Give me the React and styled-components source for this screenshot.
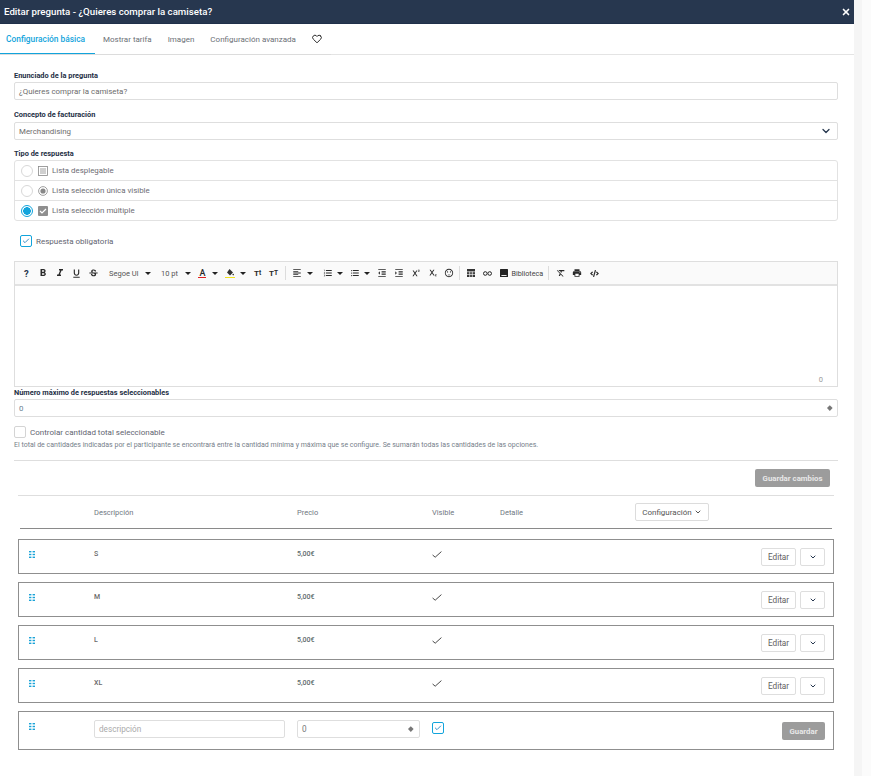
import React from "react";
import styled, { createGlobalStyle } from "styled-components";
import {
  MdFormatBold,
  MdFormatItalic,
  MdFormatUnderlined,
  MdStrikethroughS,
  MdFormatAlignLeft,
  MdFormatListNumbered,
  MdFormatListBulleted,
  MdFormatIndentDecrease,
  MdFormatIndentIncrease,
  MdSuperscript,
  MdSubscript,
  MdSentimentSatisfied,
  MdPrint,
  MdFormatClear,
} from "react-icons/md";
import { FaCode } from "react-icons/fa";
import { FiChevronDown, FiCheck, FiHeart, FiX } from "react-icons/fi";

const items = ["S", "M", "L", "XL"];

function Caret({ width = 11, left = 1.5 }) {
  return (
    <CaretSlot $width={width} $left={left}>
      <CaretMark />
    </CaretSlot>
  );
}

function Tool({ icon: Icon, size = 10 }) {
  return (
    <ToolButton>
      <Icon size={size} />
    </ToolButton>
  );
}

function FillIcon() {
  return (
    <ToolButton>
      <ColorGlyph $bar="#f2e21c">
        <svg width="8" height="7" viewBox="0 0 8 7">
          <path d="M3.5 0 L7 3.4 L4 6.4 L1 3.4 Z" fill="#333" />
          <circle cx="7.2" cy="5.6" r="0.8" fill="#333" />
        </svg>
      </ColorGlyph>
    </ToolButton>
  );
}

function TableIcon() {
  return (
    <svg width="8" height="8" viewBox="0 0 8 8">
      <rect width="8" height="8" fill="#333" />
      <path d="M0 2.8h8M0 5.4h8M2.7 2.5v5.5M5.3 2.5v5.5" stroke="#fff" strokeWidth="0.7" />
    </svg>
  );
}

function LinkIcon() {
  return (
    <svg width="9" height="5" viewBox="0 0 9 5" fill="none" stroke="#222" strokeWidth="1">
      <circle cx="2.3" cy="2.5" r="1.8" />
      <circle cx="6.7" cy="2.5" r="1.8" />
    </svg>
  );
}

function ImageIcon() {
  return (
    <svg width="8" height="8" viewBox="0 0 8 8">
      <rect width="8" height="8" rx="0.5" fill="#222" />
      <rect x="1.4" y="6" width="5.2" height="0.9" fill="#fff" />
    </svg>
  );
}

function DragDots() {
  return (
    <svg width="6" height="7" viewBox="0 0 6 7" fill="#1ba3d8">
      <rect x="0" y="0" width="2.4" height="1.4" />
      <rect x="3.6" y="0" width="2.4" height="1.4" />
      <rect x="0" y="2.8" width="2.4" height="1.4" />
      <rect x="3.6" y="2.8" width="2.4" height="1.4" />
      <rect x="0" y="5.6" width="2.4" height="1.4" />
      <rect x="3.6" y="5.6" width="2.4" height="1.4" />
    </svg>
  );
}

function RadioRow({ checked, icon, children }) {
  return (
    <OptionRow>
      <Radio $checked={checked} />
      <OptionIcon>{icon}</OptionIcon>
      <span>{children}</span>
    </OptionRow>
  );
}

function Row({ name }) {
  return (
    <ItemRow>
      <Handle>
        <DragDots />
      </Handle>
      <ItemName>{name}</ItemName>
      <ItemPrice>5,00€</ItemPrice>
      <Tick>
        <svg width="10" height="7" viewBox="0 0 10 7" fill="none" stroke="#333" strokeWidth="0.9">
          <path d="M0.6 4 L3.2 6.2 L9.4 0.6" />
        </svg>
      </Tick>
      <span />
      <RowActions>
        <SmallButton>Editar</SmallButton>
        <ChevronButton>
          <FiChevronDown size={8} strokeWidth={3} />
        </ChevronButton>
      </RowActions>
    </ItemRow>
  );
}

export default function App() {
  return (
    <Page>
      <GlobalStyle />
      <Modal>
        <Header>
          <Title>Editar pregunta - ¿Quieres comprar la camiseta?</Title>
          <FiX size={10} strokeWidth={4} color="#fff" />
        </Header>
        <Tabs>
          <TabList>
            <ActiveTab>Configuración básica</ActiveTab>
            <Tab>Mostrar tarifa</Tab>
            <Tab>Imagen</Tab>
            <Tab>Configuración avanzada</Tab>
            <HeartTab>
              <FiHeart size={10} strokeWidth={2.4} />
            </HeartTab>
          </TabList>
        </Tabs>
        <Body>
          <Label $top={1} $bottom={1}>
            Enunciado de la pregunta
          </Label>
          <Field>¿Quieres comprar la camiseta?</Field>
          <Label $top={10}>Concepto de facturación</Label>
          <Field>
            Merchandising
            <SelectChevron>
              <FiChevronDown size={12} strokeWidth={2.6} />
            </SelectChevron>
          </Field>
          <Label $top={9} $bottom={1}>
            Tipo de respuesta
          </Label>
          <OptionList>
            <RadioRow
              icon={
                <svg width="10" height="10" viewBox="0 0 10 10" fill="none" stroke="#888" strokeWidth="0.8">
                  <rect x="0.5" y="0.5" width="9" height="9" />
                  <path d="M2 3h6M2 5h6M2 7h6" />
                </svg>
              }
            >
              Lista desplegable
            </RadioRow>
            <RadioRow
              icon={
                <svg width="10" height="10" viewBox="0 0 10 10">
                  <circle cx="5" cy="5" r="4.4" fill="none" stroke="#888" strokeWidth="0.8" />
                  <circle cx="5" cy="5" r="2.6" fill="#888" />
                </svg>
              }
            >
              Lista selección única visible
            </RadioRow>
            <RadioRow
              checked
              icon={
                <svg width="10" height="10" viewBox="0 0 10 10">
                  <rect width="10" height="10" rx="1" fill="#8f8f8f" />
                  <path d="M2 5l2 2 4-4" fill="none" stroke="#fff" strokeWidth="1.2" />
                </svg>
              }
            >
              Lista selección múltiple
            </RadioRow>
          </OptionList>
          <RequiredCheck>
            <CheckBox $checked>
              <FiCheck size={8} strokeWidth={3} />
            </CheckBox>
            Respuesta obligatoria
          </RequiredCheck>
          <Editor>
            <Toolbar>
              <ToolButton>
                <ParagraphMark>?</ParagraphMark>
              </ToolButton>
              <Tool icon={MdFormatBold} size={12} />
              <Tool icon={MdFormatItalic} size={12} />
              <Tool icon={MdFormatUnderlined} size={11} />
              <Tool icon={MdStrikethroughS} size={11} />
              <ToolText $width={52}>
                Segoe UI
                <CaretMark />
              </ToolText>
              <ToolText $width={40}>
                10 pt
                <CaretMark />
              </ToolText>
              <ToolButton>
                <ColorGlyph $bar="#e02020">A</ColorGlyph>
              </ToolButton>
              <Caret />
              <FillIcon />
              <Caret left={1} />
              <SmallGlyph>
                T<small>t</small>
              </SmallGlyph>
              <SmallGlyph>
                T<small>T</small>
              </SmallGlyph>
              <Separator $left={3} $right={3.3} />
              <Tool icon={MdFormatAlignLeft} />
              <Caret width={14} left={1.6} />
              <Tool icon={MdFormatListNumbered} />
              <Caret width={10} left={0.6} />
              <Tool icon={MdFormatListBulleted} />
              <Caret width={10.2} left={0.6} />
              <Tool icon={MdFormatIndentDecrease} />
              <Tool icon={MdFormatIndentIncrease} />
              <Tool icon={MdSuperscript} />
              <Tool icon={MdSubscript} />
              <Tool icon={MdSentimentSatisfied} />
              <Separator $left={2} $right={2} />
              <ToolButton>
                <TableIcon />
              </ToolButton>
              <ToolButton>
                <LinkIcon />
              </ToolButton>
              <ToolButton>
                <ImageIcon />
              </ToolButton>
              <LibraryText>Biblioteca</LibraryText>
              <Separator $left={5} $right={3} />
              <Tool icon={MdFormatClear} />
              <Tool icon={MdPrint} />
              <Tool icon={FaCode} size={9} />
            </Toolbar>
            <EditArea>
              <Counter>0</Counter>
            </EditArea>
          </Editor>
          <Label $top={1} $bottom={1}>
            Número máximo de respuestas seleccionables
          </Label>
          <Field $blue>
            0
            <Spinner />
          </Field>
          <QuantityCheck>
            <CheckBox />
            Controlar cantidad total seleccionable
          </QuantityCheck>
          <Hint>
            El total de cantidades indicadas por el participante se encontrará entre la cantidad
            mínima y máxima que se configure. Se sumarán todas las cantidades de las opciones.
          </Hint>
          <Divider />
          <SaveBar>
            <GreyButton>Guardar cambios</GreyButton>
          </SaveBar>
          <TableArea>
            <TableHead>
              <span />
              <span>Descripción</span>
              <span>Precio</span>
              <span>Visible</span>
              <span>Detalle</span>
              <ConfigButton>
                Configuración <FiChevronDown size={8} strokeWidth={3} />
              </ConfigButton>
            </TableHead>
            {items.map((name) => (
              <Row key={name} name={name} />
            ))}
            <NewRow>
              <Handle>
                <DragDots />
              </Handle>
              <RowInput $placeholder>descripción</RowInput>
              <RowInput $short>
                0
                <Spinner />
              </RowInput>
              <NewCheck>
                <CheckBox $checked>
                  <FiCheck size={8} strokeWidth={3} />
                </CheckBox>
              </NewCheck>
              <span />
              <NewSaveButton $small>Guardar</NewSaveButton>
            </NewRow>
          </TableArea>
        </Body>
      </Modal>
      <ScrollStrip />
    </Page>
  );
}

const GlobalStyle = createGlobalStyle`
  html, body {
    margin: 0;
    height: 100%;
    overflow: hidden;
    background: #fbfbfb;
    font-family: Roboto, "Liberation Sans", sans-serif;
  }
`;

const Page = styled.div`
  display: flex;
  height: 776px;
  overflow: hidden;
`;

const Modal = styled.div`
  width: 854px;
  background: #fff;
  flex-shrink: 0;
`;

const ScrollStrip = styled.div`
  width: 8px;
  background: #f5f5f5;
`;

const Header = styled.header`
  height: 24px;
  box-sizing: border-box;
  background: #27374f;
  border-bottom: 1px solid #20304a;
  display: flex;
  align-items: center;
  justify-content: space-between;
  padding: 0 3px 0 4px;
`;

const Title = styled.h1`
  margin: 0;
  font-size: 9.7px;
  font-weight: 500;
  color: #fff;
`;

const Tabs = styled.nav`
  height: 31px;
  box-sizing: border-box;
  border-bottom: 1px solid #e4e4e4;
`;

const TabList = styled.div`
  display: inline-flex;
  height: 31px;
  box-sizing: border-box;
  border-bottom: 1px solid #dcdcdc;
`;

const Tab = styled.div`
  display: flex;
  align-items: center;
  height: 30px;
  box-sizing: border-box;
  padding: 0 8px;
  font-size: 8px;
  color: #6b6f76;
`;

const ActiveTab = styled(Tab)`
  width: 95px;
  padding: 0 0 0 6px;
  font-size: 8.4px;
  font-weight: 500;
  color: #12a4dc;
  border-bottom: 1px solid #12a4dc;
`;

const HeartTab = styled(Tab)`
  color: #2b2b2b;
  padding: 0 9px 0 8px;
`;

const Body = styled.main`
  padding: 15px 16px 0 14px;
`;

const Label = styled.label`
  display: block;
  margin-top: ${(p) => p.$top || 0}px;
  margin-bottom: ${(p) => p.$bottom ?? 2}px;
  font-size: 7.4px;
  line-height: 10px;
  font-weight: 700;
  color: #1e2f45;
`;

const Field = styled.div`
  height: 18px;
  box-sizing: border-box;
  border: 1px solid #dedede;
  border-radius: 2px;
  display: flex;
  align-items: center;
  justify-content: space-between;
  padding: 0 4px;
  font-size: 7.9px;
  color: ${(p) => (p.$blue ? "#6b7f93" : "#6c6c6c")};
`;

const SelectChevron = styled.span`
  display: flex;
  color: #27374f;
  margin-right: 1px;
`;

const OptionList = styled.div`
  border: 1px solid #e2e2e2;
  border-radius: 3px;
`;

const OptionRow = styled.div`
  height: 19px;
  display: flex;
  align-items: center;
  padding-left: 6px;
  font-size: 7.9px;
  color: #6c6c72;
  & + & {
    border-top: 1px solid #e2e2e2;
  }
`;

const Radio = styled.span`
  width: 12px;
  height: 12px;
  box-sizing: border-box;
  border-radius: 50%;
  margin-right: 5px;
  border: 1px solid ${(p) => (p.$checked ? "#12a4dc" : "#d8d8d8")};
  background: ${(p) => (p.$checked ? "radial-gradient(circle, #12a4dc 0 3.6px, #fff 4px)" : "#fff")};
`;

const OptionIcon = styled.span`
  display: flex;
  width: 14px;
`;

const CheckBox = styled.span`
  width: 12px;
  height: 12px;
  box-sizing: border-box;
  border-radius: 2px;
  display: inline-flex;
  align-items: center;
  justify-content: center;
  color: #3c8fc8;
  border: 1px solid ${(p) => (p.$checked ? "#12a4dc" : "#d4d4d4")};
`;

const CheckLine = styled.div`
  display: flex;
  align-items: center;
  gap: 4px;
  font-size: 8px;
  color: #5f6470;
`;

const RequiredCheck = styled(CheckLine)`
  margin: 14px 0 14px 6px;
`;

const QuantityCheck = styled(CheckLine)`
  margin-top: 9px;
`;

const Editor = styled.section`
  border: 1px solid #dedede;
`;

const Toolbar = styled.div`
  height: 22px;
  background: #fafafa;
  border-bottom: 2px solid #e2e2e2;
  display: flex;
  align-items: center;
  padding-left: 3px;
  color: #2a2a2a;
`;

const ToolButton = styled.span`
  width: 16.8px;
  flex-shrink: 0;
  display: flex;
  align-items: center;
  justify-content: center;
`;

const ParagraphMark = styled.span`
  font-size: 9.5px;
  font-weight: 700;
  color: #27374f;
`;

const CaretSlot = styled.span`
  width: ${(p) => p.$width}px;
  padding-left: ${(p) => p.$left}px;
  box-sizing: border-box;
  flex-shrink: 0;
  display: flex;
`;

const CaretMark = styled.span`
  width: 0;
  height: 0;
  border-left: 3px solid transparent;
  border-right: 3px solid transparent;
  border-top: 3px solid #222;
  flex-shrink: 0;
`;

const ToolText = styled.span`
  width: ${(p) => p.$width}px;
  flex-shrink: 0;
  padding: 0 3px 0 7px;
  box-sizing: border-box;
  display: flex;
  align-items: center;
  justify-content: space-between;
  font-size: 7.5px;
  color: #555;
`;

const ColorGlyph = styled.span`
  display: flex;
  align-items: center;
  justify-content: center;
  height: 9px;
  padding: 0 1px;
  font-size: 9px;
  font-weight: 500;
  border-bottom: 1px solid ${(p) => p.$bar};
`;

const SmallGlyph = styled(ToolButton)`
  width: 16px;
  font-size: 8px;
  font-weight: 700;
  small {
    font-size: 6.5px;
  }
`;

const Separator = styled.span`
  width: 1px;
  height: 14px;
  margin: 0 ${(p) => p.$right}px 0 ${(p) => p.$left}px;
  background: #dcdcdc;
  flex-shrink: 0;
`;

const LibraryText = styled.span`
  font-size: 7.2px;
  color: #444;
  margin-left: -1.4px;
`;

const EditArea = styled.div`
  height: 100px;
  position: relative;
  background: #fff;
`;

const Counter = styled.span`
  position: absolute;
  right: 14px;
  bottom: 2px;
  font-size: 7.5px;
  color: #999;
`;

const Spinner = styled.span`
  width: 3.6px;
  height: 3.6px;
  margin-right: 1px;
  background: #777;
  transform: rotate(45deg);
`;

const Hint = styled.p`
  margin: 2px 0 0;
  font-size: 7px;
  line-height: 10px;
  color: #76808a;
  white-space: nowrap;
`;

const Divider = styled.hr`
  margin: 10px 0 0;
  border: 0;
  border-top: 1px solid #dedede;
`;

const SaveBar = styled.div`
  display: flex;
  justify-content: flex-end;
  padding: 8px 8px 8px 0;
`;

const GreyButton = styled.span`
  background: #9c9c9c;
  border-radius: 2px;
  color: #e8e8e8;
  font-size: 7.8px;
  font-weight: 700;
  display: flex;
  align-items: center;
  justify-content: center;
  height: 18px;
  width: ${(p) => (p.$small ? "43px" : "75px")};
`;

const NewSaveButton = styled(GreyButton)`
  margin-top: 2px;
`;

const TableArea = styled.section`
  margin: 0 4px;
  border-top: 1px solid #dedede;
`;

const TableHead = styled.div`
  height: 33px;
  box-sizing: border-box;
  margin: 0 2px 10px;
  border-bottom: 1px solid #8a8a8a;
  display: grid;
  grid-template-columns: 74px 203px 135px 68px 135px 1fr;
  align-items: center;
  font-size: 7.5px;
  color: #6f7782;
`;

const ConfigButton = styled.span`
  width: 74px;
  height: 18px;
  box-sizing: border-box;
  border: 1px solid #dcdcdc;
  border-radius: 2px;
  display: inline-flex;
  align-items: center;
  justify-content: center;
  gap: 2px;
  font-size: 8px;
  color: #555;
`;

const ItemRow = styled.div`
  height: 35px;
  box-sizing: border-box;
  margin-bottom: 8px;
  border: 1px solid #8f8f8f;
  display: grid;
  grid-template-columns: 75px 203px 135px 68px 1fr auto;
  align-items: start;
  padding: 8px 8px 0 0;
  font-size: 7px;
  color: #6a6a6a;
`;

const Handle = styled.span`
  display: flex;
  padding-left: 10px;
  height: 11px;
  margin-top: 1px;
  align-items: center;
`;

const ItemName = styled.span`
  font-weight: 500;
  line-height: 11px;
  margin-top: 1px;
`;

const ItemPrice = styled(ItemName)`
  color: #5d6b6b;
`;

const Tick = styled.span`
  display: flex;
  height: 11px;
  margin-top: 1px;
  align-items: center;
`;

const RowActions = styled.div`
  display: flex;
  gap: 4px;
`;

const SmallButton = styled.span`
  width: 35px;
  height: 18px;
  box-sizing: border-box;
  border: 1px solid #dedede;
  border-radius: 2px;
  display: flex;
  align-items: center;
  justify-content: center;
  font-size: 8.2px;
  color: #5e5e5e;
`;

const ChevronButton = styled(SmallButton)`
  width: 25px;
  color: #27374f;
`;

const NewRow = styled(ItemRow)`
  height: 39px;
  margin-bottom: 0;
`;

const RowInput = styled.span`
  width: ${(p) => (p.$short ? "123px" : "191px")};
  height: 18px;
  box-sizing: border-box;
  border: 1px solid #dedede;
  border-radius: 2px;
  padding: 0 5px 0 4px;
  display: flex;
  align-items: center;
  justify-content: space-between;
  font-size: 8.2px;
  color: ${(p) => (p.$placeholder ? "#aaa" : "#777")};
`;

const NewCheck = styled.span`
  display: flex;
  margin-top: 2px;
`;
